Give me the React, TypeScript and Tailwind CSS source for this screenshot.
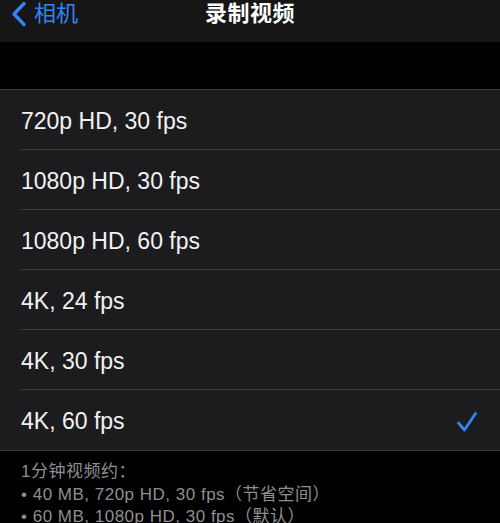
import React from 'react';

const options = [
  '720p HD, 30 fps',
  '1080p HD, 30 fps',
  '1080p HD, 60 fps',
  '4K, 24 fps',
  '4K, 30 fps',
  '4K, 60 fps',
];

const selected = '4K, 60 fps';

export default function App() {
  return (
    <div
      className="w-[500px] h-[523px] overflow-hidden bg-black text-white"
      style={{ fontFamily: '"Liberation Sans", "Noto Sans CJK SC", sans-serif' }}
    >
      {/* Nav bar */}
      <div className="h-[42px] bg-[#161616] grid grid-cols-[1fr_auto_1fr] items-start">
        <div className="flex items-center pl-[11px] pt-[1px] text-[#2f86f6]">
          <svg width="16" height="26" viewBox="0 0 16 26" fill="none">
            <path d="M13 2.5 L3 13 L13 23.5" stroke="currentColor" strokeWidth="3.4" strokeLinecap="round" strokeLinejoin="round" />
          </svg>
          <span className="ml-[7px] text-[22px] leading-[26px]">相机</span>
        </div>
        <div className="text-[22px] leading-[26px] font-bold pt-[1px] tracking-[0.5px]">录制视频</div>
        <div />
      </div>

      {/* Gap */}
      <div className="h-[47px]" />

      {/* Options list */}
      <div className="bg-[#1c1c1e] border-y border-[#3a3a3c]">
        {options.map((opt, i) => (
          <div key={opt} className="pl-[20px]">
            <div
              className={`h-[60px] flex items-center justify-between pr-[22px] pt-[3px] ${
                i < options.length - 1 ? 'border-b border-[#3a3a3c]' : ''
              }`}
            >
              <span className="pl-[1px] text-[23px] text-[#f2f2f2]">{opt}</span>
              {opt === selected && (
                <svg width="22" height="23" viewBox="0 0 22 23" fill="none">
                  <path d="M2.5 13 L8.5 20 L19.5 3.5" stroke="#2f86f6" strokeWidth="2.8" strokeLinecap="round" strokeLinejoin="round" />
                </svg>
              )}
            </div>
          </div>
        ))}
      </div>

      {/* Footer */}
      <div className="px-[21px] pt-[10px] text-[17px] leading-[22.5px] tracking-[0.5px] text-[#8e8e93]">
        <div>1分钟视频约：</div>
        <div>• 40 MB, 720p HD, 30 fps（节省空间）</div>
        <div>• 60 MB, 1080p HD, 30 fps（默认）</div>
      </div>
    </div>
  );
}
